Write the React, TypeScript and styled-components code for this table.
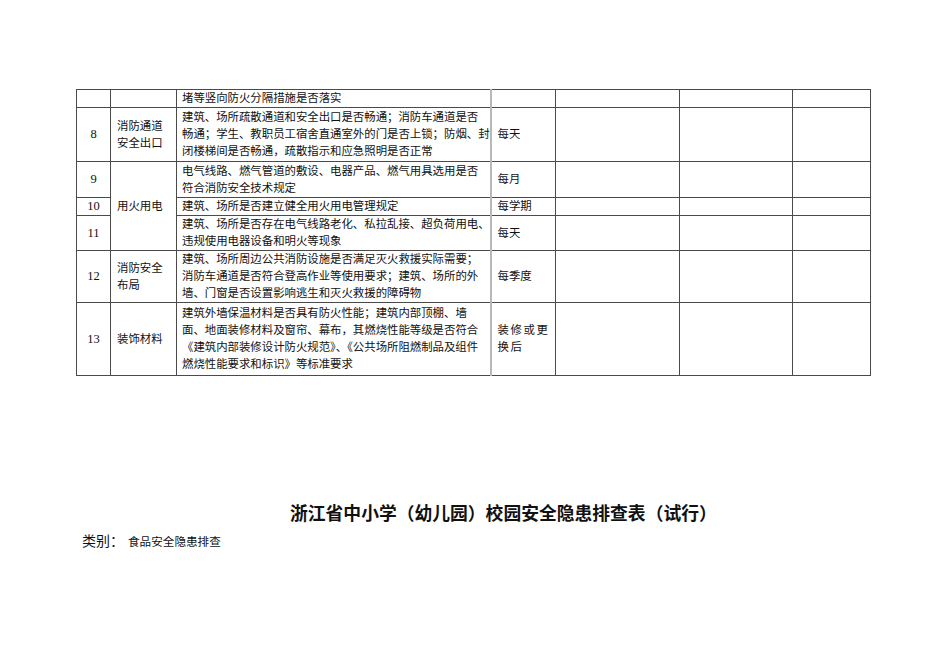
import * as React from "react";
import styled, { createGlobalStyle } from "styled-components";

const Global = createGlobalStyle`
  html, body { margin: 0; padding: 0; background: #fff; }
  body { font-family: "Liberation Serif", "Noto Sans CJK SC", serif; color: #111; }
`;

const Page = styled.div`
  width: 950px;
  height: 672px;
  padding: 89px 0 0 76px;
  box-sizing: border-box;
`;

const Table = styled.table`
  border-collapse: collapse;
  table-layout: fixed;
  width: 794px;
  font-size: 11.4px;
  line-height: 17px;
`;

const Col = styled.col<{ $w: number }>`
  width: ${(p) => p.$w}px;
`;

const Tr = styled.tr<{ $h: number }>`
  height: ${(p) => p.$h}px;
`;

const Cell = styled.td<{ $center?: boolean; $pad?: number; $light?: boolean; $spaced?: boolean }>`
  border: 1px solid #4a4a4a;
  ${(p) => (p.$light ? "border-left: 2px solid #b8b8b8;" : "")}
  padding: 0 ${(p) => p.$pad ?? 4}px;
  text-align: ${(p) => (p.$center ? "center" : "left")};
  font-size: ${(p) => (p.$center ? "12.5px" : "inherit")};
  vertical-align: middle;
  letter-spacing: ${(p) => (p.$spaced ? "1.6px" : "0")};
  white-space: nowrap;
`;

const Content = styled.td`
  border: 1px solid #4a4a4a;
  padding: 0 2px 0 5px;
  vertical-align: middle;
  overflow: hidden;
`;

const Line = styled.span`
  display: block;
  white-space: nowrap;
`;

const Title = styled.h1`
  margin: 126px 0 0 214px;
  font-size: 17.8px;
  font-weight: bold;
  line-height: 24px;
`;

const Category = styled.div`
  display: flex;
  align-items: baseline;
  margin: 4px 0 0 6px;
  font-family: "Noto Sans CJK SC", sans-serif;
`;

const CatLabel = styled.span`
  font-size: 14px;
  margin-right: 4px;
`;

const CatValue = styled.span`
  font-size: 11.6px;
  font-family: "Liberation Serif", "Noto Sans CJK SC", serif;
`;

type Row = {
  no?: string;
  item?: string;
  itemSpan?: number;
  merged?: boolean;
  text: string[];
  freq?: string;
  spaced?: boolean;
  height: number;
};

const widths = [34, 66, 314, 65, 124, 113, 78];

const rows: Row[] = [
  { text: ["堵等竖向防火分隔措施是否落实"], height: 17 },
  {
    no: "8",
    item: "消防通道\n安全出口",
    text: [
      "建筑、场所疏散通道和安全出口是否畅通；消防车通道是否",
      "畅通；学生、教职员工宿舍直通室外的门是否上锁；防烟、封",
      "闭楼梯间是否畅通，疏散指示和应急照明是否正常",
    ],
    freq: "每天",
    height: 54,
  },
  {
    no: "9",
    item: "用火用电",
    itemSpan: 3,
    text: ["电气线路、燃气管道的敷设、电器产品、燃气用具选用是否", "符合消防安全技术规定"],
    freq: "每月",
    height: 36,
  },
  { no: "10", merged: true, text: ["建筑、场所是否建立健全用火用电管理规定"], freq: "每学期", height: 17 },
  {
    no: "11",
    merged: true,
    text: ["建筑、场所是否存在电气线路老化、私拉乱接、超负荷用电、", "违规使用电器设备和明火等现象"],
    freq: "每天",
    height: 35,
  },
  {
    no: "12",
    item: "消防安全\n布局",
    text: [
      "建筑、场所周边公共消防设施是否满足灭火救援实际需要；",
      "消防车通道是否符合登高作业等使用要求；建筑、场所的外",
      "墙、门窗是否设置影响逃生和灭火救援的障碍物",
    ],
    freq: "每季度",
    height: 52,
  },
  {
    no: "13",
    item: "装饰材料",
    text: [
      "建筑外墙保温材料是否具有防火性能；建筑内部顶棚、墙",
      "面、地面装修材料及窗帘、幕布，其燃烧性能等级是否符合",
      "《建筑内部装修设计防火规范》、《公共场所阻燃制品及组件",
      "燃烧性能要求和标识》等标准要求",
    ],
    freq: "装修或更\n换后",
    spaced: true,
    height: 73,
  },
];

function lines(s?: string) {
  if (!s) return null;
  return s.split("\n").map((l, i) => <Line key={i}>{l}</Line>);
}

export default function App() {
  return (
    <Page>
      <Global />
      <Table>
        <colgroup>
          {widths.map((w, i) => (
            <Col key={i} $w={w} />
          ))}
        </colgroup>
        <tbody>
          {rows.map((r, i) => (
            <Tr key={i} $h={r.height}>
              <Cell $center>{r.no}</Cell>
              {!r.merged && (
                <Cell $pad={6} rowSpan={r.itemSpan ?? 1}>
                  {lines(r.item)}
                </Cell>
              )}
              <Content>{r.text.map((t, j) => <Line key={j}>{t}</Line>)}</Content>
              <Cell $light $pad={6} $spaced={r.spaced}>
                {lines(r.freq)}
              </Cell>
              <Cell />
              <Cell />
              <Cell />
            </Tr>
          ))}
        </tbody>
      </Table>
      <Title>浙江省中小学（幼儿园）校园安全隐患排查表（试行）</Title>
      <Category>
        <CatLabel>类别：</CatLabel>
        <CatValue>食品安全隐患排查</CatValue>
      </Category>
    </Page>
  );
}
